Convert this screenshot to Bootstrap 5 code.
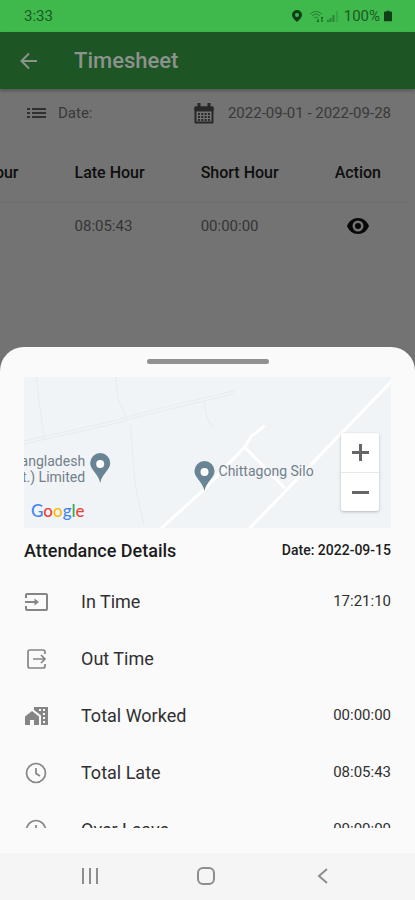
<!DOCTYPE html>
<html lang="en">
<head>
<meta charset="utf-8">
<meta name="viewport" content="width=device-width, initial-scale=1">
<title>Timesheet</title>
<link href="https://cdn.jsdelivr.net/npm/bootstrap@5.3.0/dist/css/bootstrap.min.css" rel="stylesheet">
<style>
  body { font-family: Roboto, "Liberation Sans", sans-serif; background: #737373; color: #303030; }
  svg { display: block; flex-shrink: 0; }
  button { font: inherit; color: inherit; }
  .plain-btn { background: none; border: 0; padding: 0; }
  .status-bar { height: 32px; background: #3fb84c; color: #1b5a23; font-size: 15px; padding: 0 23px 0 24px; }
  .app-bar { height: 57px; background: #1d5525; color: #8c928c; padding: 0 20px; gap: 36px; box-shadow: 0 2px 3px rgba(0,0,0,.25); }
  .app-title { font-size: 22px; font-weight: 500; line-height: 28px; }
  .date-row { height: 48px; padding: 0 24px 0 27px; font-size: 15px; color: #393939; }
  .date-range { gap: 14px; }
  .hours-wrap { margin-right: 4px; }
  .hours { width: auto; white-space: nowrap; font-size: 15px; color: #353535; }
  .hours th, .hours td { padding: 0 56px 0 0; }
  .hours th:last-child, .hours td:last-child { padding-right: 30px; }
  .hours th { height: 65px; padding-top: 8px; font-size: 16px; font-weight: 500; color: #0e0e0e; }
  .hours td { height: 48px; border-top: 1px solid #6e6e6e; }
  .sheet { background: #fafafa; border-radius: 24px 24px 0 0; padding: 12px 24px 25px; }
  .grip { width: 122px; height: 5px; border-radius: 3px; background: #919191; margin-bottom: 13px; }
  .map-box { height: 151px; background: #f1f4f6; }
  .map-label { font-size: 14px; fill: #71808a; }
  .map-brand { left: 7px; bottom: 4px; font: 500 17px/26px Lato, Roboto, sans-serif; }
  .g-blue { color: #4285f4; } .g-red { color: #ea4335; } .g-gold { color: #fbbc05; } .g-green { color: #34a853; }
  .zoom-box { right: 12px; bottom: 17px; width: 38px; background: #fff; box-shadow: 0 1px 3px rgba(0,0,0,.25); border-radius: 2px; }
  .zoom-box button { height: 39px; color: #666; }
  .zoom-box button + button { border-top: 1px solid #e8e8e8; }
  .sheet-head { height: 45px; color: #1c1c1c; }
  .sheet-head h2 { font-size: 18px; font-weight: 500; }
  .sheet-head time { font-size: 14px; font-weight: 500; }
  .details { height: 255px; overflow: hidden; }
  .details li { height: 57px; font-size: 18px; }
  .details svg { margin-right: 32px; color: #858585; }
  .details .amount { font-size: 15px; }
  .nav-keys { height: 47px; background: #f5f5f5; color: #8d8d8d; padding: 0 34px 2px 32px; }
</style>
<script src="https://cdn.jsdelivr.net/npm/bootstrap@5.3.0/dist/js/bootstrap.bundle.min.js"></script>
</head>
<body>
<div class="d-flex flex-column min-vh-100">
  <div class="status-bar d-flex align-items-center">
    <span class="me-auto">3:33</span>
    <svg width="10" height="12" viewBox="0 0 10 12" fill="#103f17" fill-rule="evenodd"><path d="M5 0a5 5 0 0 0-5 5c0 3 5 7 5 7s5-4 5-7a5 5 0 0 0-5-5zm0 3a2 2 0 1 1 0 4 2 2 0 0 1 0-4z"/></svg>
    <svg class="ms-2" width="30" height="13" viewBox="0 0 30 13" fill="none" stroke="#2b8136"><path d="M0 4q6-5 12 0M2 6q4-4 8 0M4 8q2-2 4 0"/><path d="M8 9v3M7 11l1 1 1-1M12 7v5M11 8l1-1 1 1" stroke="#15541e"/><path d="M18 10v2M20.500 8v4M23.500 5v7" stroke-width="2"/><path d="M27 1v11" stroke="#35a442" stroke-width="2"/></svg>
    <span class="ms-1">100%</span>
    <svg class="ms-1" width="8" height="12" viewBox="0 0 9 12" fill="#103f17"><path d="M3 0h3v1h2q1 0 1 1v9q0 1-1 1H1q-1 0-1-1V2q0-1 1-1h2z"/></svg>
  </div>
  <header class="app-bar d-flex align-items-center position-relative">
    <button class="plain-btn" type="button" aria-label="Back"><svg width="18" height="18" viewBox="0 0 18 18" fill="none" stroke="currentColor" stroke-width="2"><path d="M17 9H2M9 1.500 1.500 9 9 16.500"/></svg></button>
    <h1 class="app-title mb-0">Timesheet</h1>
  </header>
  <main class="flex-grow-1">
    <div class="date-row d-flex align-items-center">
      <svg width="19" height="12" viewBox="0 0 19 12" stroke="#303030" stroke-width="2"><path d="M0 2h3M5 2h14M0 6h3M5 6h14M0 10h3M5 10h14"/></svg>
      <label class="ms-2 ps-1 me-auto" for="range">Date:</label>
      <button id="range" class="plain-btn date-range d-flex align-items-center" type="button">
        <svg width="20" height="21" viewBox="0 0 20 21" fill="none" stroke="#282828"><path d="M1.500 4.500h17v15h-17z" stroke-width="2" stroke-linejoin="round"/><path d="M1 4h18v4H1z" fill="#282828"/><path d="M5 0v5M15 0v5" stroke-width="3"/><path d="M4 11h12M4 14h12M4 17h12" stroke-width="2" stroke-dasharray="2 1.300"/></svg>
        <span>2022-09-01 - 2022-09-28</span>
      </button>
    </div>
    <div class="hours-wrap d-flex justify-content-end overflow-hidden">
      <table class="hours flex-shrink-0">
        <thead><tr><th>Work Hour</th><th>Late Hour</th><th>Short Hour</th><th>Action</th></tr></thead>
        <tbody><tr><td></td><td>08:05:43</td><td>00:00:00</td>
          <td><button class="plain-btn d-block mx-auto" type="button" aria-label="View details"><svg width="22" height="16" viewBox="0 0 22 16" fill="#080808" fill-rule="evenodd"><path d="M11 0C6 0 2 3 0 8c2 5 6 8 11 8s9-3 11-8c-2-5-6-8-11-8zm0 2.500a5.500 5.500 0 1 1 0 11 5.500 5.500 0 0 1 0-11zM11 5a3 3 0 1 0 0 6 3 3 0 0 0 0-6z"/></svg></button></td></tr></tbody>
      </table>
    </div>
  </main>
  <section class="sheet" aria-label="Attendance">
    <div class="grip mx-auto"></div>
    <div class="map-box position-relative overflow-hidden">
      <svg class="w-100 h-100" viewBox="0 0 366 151" preserveAspectRatio="xMidYMid slice" role="img" aria-label="Map">
        <g fill="none" stroke="#e8ebed"><path d="M0 64 85 45 125 34 210 14M0 67 85 48 125 37 210 17M12 0l8 62M91 0l3 22 8 20M106 49l5 60 9 40M180 24q1 18 8 26"/></g>
        <g fill="none" stroke="#fff" stroke-width="3"><path d="M366 5 225 151M260 111 220 70 227 59 240 49M220 70 180 112 137 151"/></g>
        <g fill="#698595"><path d="M76 76a10 10 0 0 0-10 10c0 7 8 10 10 20 2-10 10-13 10-20a10 10 0 0 0-10-10z"/><path d="M180 84a10 10 0 0 0-10 10c0 7 8 10 10 20 2-10 10-13 10-20a10 10 0 0 0-10-10z"/></g>
        <g fill="#fff"><circle cx="76" cy="87" r="4"/><circle cx="180" cy="95" r="4"/></g>
        <g class="map-label"><text x="61" y="89" text-anchor="end">Bangladesh</text><text x="61" y="105" text-anchor="end">(Pvt.) Limited</text><text x="194" y="99">Chittagong Silo</text></g>
      </svg>
      <div class="map-brand position-absolute"><span class="g-blue">G</span><span class="g-red">o</span><span class="g-gold">o</span><span class="g-blue">g</span><span class="g-green">l</span><span class="g-red">e</span></div>
      <div class="zoom-box position-absolute d-flex flex-column">
        <button class="plain-btn d-flex align-items-center justify-content-center" type="button" aria-label="Zoom in"><svg width="17" height="17" viewBox="0 0 17 17" stroke="currentColor" stroke-width="3"><path d="M0 8.500h17M8.500 0v17"/></svg></button>
        <button class="plain-btn d-flex align-items-center justify-content-center" type="button" aria-label="Zoom out"><svg width="17" height="17" viewBox="0 0 17 17" stroke="currentColor" stroke-width="3"><path d="M0 8.500h17"/></svg></button>
      </div>
    </div>
    <div class="sheet-head d-flex align-items-center justify-content-between">
      <h2 class="mb-0">Attendance Details</h2>
      <time datetime="2022-09-15">Date: 2022-09-15</time>
    </div>
    <ul class="details list-unstyled mb-0">
      <li class="d-flex align-items-center"><svg width="25" height="24" viewBox="0 0 25 24" fill="none" stroke="currentColor" stroke-width="2"><path d="M2 8V5q0-1 1-1h19q1 0 1 1v14q0 1-1 1H3q-1 0-1-1v-3"/><path d="M1 12h11"/><path d="M10.500 8.500v7L15 12z" fill="currentColor" stroke="none"/></svg><span class="me-auto">In Time</span><span class="amount">17:21:10</span></li>
      <li class="d-flex align-items-center"><svg width="25" height="24" viewBox="0 0 25 24" fill="none" stroke="currentColor" stroke-width="2"><path d="M21 7V5q0-2-2-2H6Q4 3 4 5v14q0 2 2 2h13q2 0 2-2v-2M9 12h12M17 8l4 4-4 4" stroke-width="1.700"/></svg><span class="me-auto">Out Time</span></li>
      <li class="d-flex align-items-center"><svg width="25" height="24" viewBox="0 0 25 24" fill="currentColor" fill-rule="evenodd"><path d="M1 12.500 8 7l7 5.500V21h-5v-5H6v5H1zM10 3h14v18h-7v-9.500L10 6zm5 2v2h2V5zm4 0v2h2V5zm0 4v2h2V9zm0 4v2h2v-2zm0 4v2h2v-2z"/></svg><span class="me-auto">Total Worked</span><span class="amount">00:00:00</span></li>
      <li class="d-flex align-items-center"><svg width="25" height="24" viewBox="0 0 25 24" fill="none" stroke="currentColor" stroke-width="1.700"><circle cx="12" cy="12" r="9.500"/><path d="M12 7v5.500l4 2.500"/></svg><span class="me-auto">Total Late</span><span class="amount">08:05:43</span></li>
      <li class="d-flex align-items-center"><svg width="25" height="24" viewBox="0 0 25 24" fill="none" stroke="currentColor" stroke-width="1.700"><circle cx="12" cy="12" r="9.500"/><path d="M12 7v6M12 15v2"/></svg><span class="me-auto">Over Leave</span><span class="amount">00:00:00</span></li>
    </ul>
  </section>
  <nav class="nav-keys d-flex align-items-center justify-content-around" aria-label="System">
    <button class="plain-btn" type="button" aria-label="Recent apps"><svg width="18" height="16" viewBox="0 0 18 16" stroke="currentColor" stroke-width="2"><path d="M2 0v16M9 0v16M16 0v16"/></svg></button>
    <button class="plain-btn" type="button" aria-label="Home"><svg width="18" height="18" viewBox="0 0 18 18" fill="none" stroke="currentColor" stroke-width="2"><rect x="1" y="1" width="16" height="16" rx="5"/></svg></button>
    <button class="plain-btn" type="button" aria-label="Back"><svg width="18" height="16" viewBox="0 0 18 16" fill="none" stroke="currentColor" stroke-width="2"><path d="M13 1 5 8l8 7"/></svg></button>
  </nav>
</div>
</body>
</html>
